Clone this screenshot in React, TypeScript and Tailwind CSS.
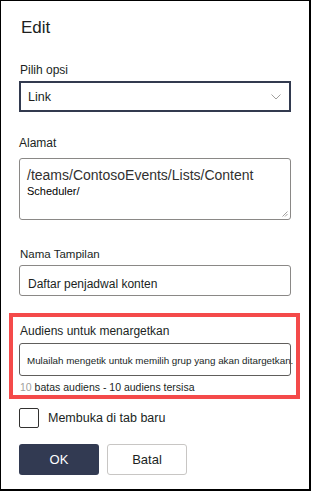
export default function App() {
  return (
    <div className="w-[311px] h-[491px] bg-white border-l border-t border-r-2 border-b-2 border-black font-['Liberation_Sans',Arial,sans-serif] text-[#201f1e] overflow-hidden">
      <div className="pl-[18px] pr-[18px]">
        <h1 className="pt-[15px] text-[17px] leading-[24px] pl-[2px]">Edit</h1>

        <label className="block mt-[22px] text-[12px] leading-[16px] pl-[1px]">Pilih opsi</label>
        <div className="mt-[3px] h-[31px] w-[272px] border-2 border-[#323a4f] flex items-center justify-between pl-[7px] pr-[8px]">
          <span className="text-[12.5px] pt-[1px]">Link</span>
          <svg width="10" height="6" viewBox="0 0 10 6" fill="none" className="text-[#a19f9d]">
            <path d="M0.5 0.5 L5 5 L9.5 0.5" stroke="currentColor" strokeWidth="1" />
          </svg>
        </div>

        <label className="block mt-[23px] text-[12px] leading-[16px]">Alamat</label>
        <div className="relative mt-[7px] h-[62px] w-[272px] border border-[#8a8886] rounded-[3px] pl-[7px] pt-[7px]">
          <div className="text-[14px] leading-[18px] text-[#323130]">/teams/ContosoEvents/Lists/Content</div>
          <div className="text-[11px] leading-[14px] text-black">Scheduler/</div>
          <svg width="6" height="6" viewBox="0 0 6 6" className="absolute right-[2px] bottom-[2px] text-[#8a8886]">
            <path d="M5.5 0.5 L0.5 5.5 M5.5 3 L3 5.5" stroke="currentColor" strokeWidth="0.8" />
          </svg>
        </div>

        <label className="block mt-[26px] text-[11.5px] leading-[16px] pl-[1px]">Nama Tampilan</label>
        <div className="mt-[3px] h-[31px] w-[272px] border border-[#8a8886] rounded-[3px] pl-[8px] pt-[10px]">
          <div className="text-[12px] leading-[16px]">Daftar penjadwal konten</div>
        </div>
      </div>

      <div className="ml-[8px] mt-[17px] w-[291px] h-[86px] border-4 border-[#f44a4a] pl-[6px]">
        <label className="block mt-[6px] text-[12px] leading-[16px] pl-[1px]">Audiens untuk menargetkan</label>
        <div className="mt-[4px] h-[33px] w-[272px] border border-[#605e5c] rounded-[3px] flex items-center pl-[7px]">
          <span className="text-[9.8px] leading-[14px] whitespace-nowrap pt-[2px]">Mulailah mengetik untuk memilih grup yang akan ditargetkan.</span>
        </div>
        <div className="mt-[4px] text-[10.5px] leading-[14px] whitespace-nowrap pl-[1px]">
          <span className="text-[#a19f9d]">10</span> batas audiens - 10 audiens tersisa
        </div>
      </div>

      <div className="pl-[18px] mt-[9px] flex items-center gap-[9px]">
        <div className="w-[20px] h-[20px] border border-[#323130] rounded-[2px]" />
        <span className="text-[12.5px] leading-[16px]">Membuka di tab baru</span>
      </div>

      <div className="pl-[18px] mt-[16px] flex gap-[8px]">
        <button className="w-[80px] h-[31px] rounded-[3px] bg-[#323a52] text-white text-[13px]">OK</button>
        <button className="w-[80px] h-[31px] rounded-[3px] border border-[#c8c6c4] bg-white text-[13px] text-[#201f1e]">Batal</button>
      </div>
    </div>
  );
}
